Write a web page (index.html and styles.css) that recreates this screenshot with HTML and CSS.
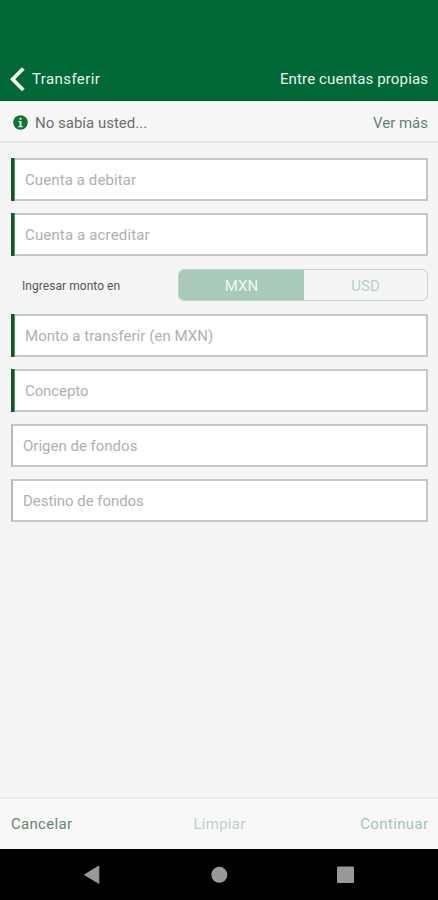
FILE: index.html
```html
<!DOCTYPE html>
<html lang="es">
<head>
<meta charset="utf-8">
<meta name="viewport" content="width=device-width">
<title>Transferir</title>
<link rel="stylesheet" href="styles.css">
</head>
<body>
<header class="header">
  <div class="back">
    <svg class="chevron" width="15" height="25" viewBox="0 0 15 25"><path d="M13.3 1.5 2.6 12.2l10.7 10.8" fill="none" stroke="#fff" stroke-width="3.7"/></svg>
    <span class="t-back">Transferir</span>
  </div>
  <span class="t-title">Entre cuentas propias</span>
</header>
<section class="info">
  <svg width="15" height="15" viewBox="0 0 15 15"><circle cx="7.5" cy="7.5" r="7.3" fill="#117532"/><path d="M6.5 2.7h2v2h-2zM5.5 6h3v5h1.2v1.2H5.3V11h1.3V7.2H5.5z" fill="#d5ead8"/></svg>
  <span class="t-tip">No sabía usted...</span>
  <a class="more">Ver más</a>
</section>
<main class="form">
  <div class="field required"><span class="t-debit">Cuenta a debitar</span></div>
  <div class="field required"><span class="t-credit">Cuenta a acreditar</span></div>
  <div class="currency">
    <span class="t-currency">Ingresar monto en</span>
    <div class="toggle"><span class="option active">MXN</span><span class="option">USD</span></div>
  </div>
  <div class="field required"><span class="t-amount">Monto a transferir (en MXN)</span></div>
  <div class="field required"><span class="t-concept">Concepto</span></div>
  <div class="field"><span class="t-origin">Origen de fondos</span></div>
  <div class="field"><span class="t-target">Destino de fondos</span></div>
</main>
<footer class="actions">
  <span class="cancel">Cancelar</span>
  <span class="clear">Limpiar</span>
  <span class="next">Continuar</span>
</footer>
<nav class="system">
  <svg width="438" height="51" viewBox="0 0 438 51"><g fill="#999"><path d="M84.5 25.8 98.8 17v17.3z" stroke="#999" stroke-linejoin="round"/><circle cx="219.3" cy="25.8" r="8"/><rect x="337" y="17.5" width="17" height="16.5" rx="1"/></g></svg>
</nav>
</body>
</html>
```
FILE: styles.css
```css
* { box-sizing: border-box; }
body {
  margin: 0;
  height: 900px;
  display: flex;
  flex-direction: column;
  background: #f5f5f5;
  font: 15px/20px Roboto, "Liberation Sans", sans-serif;
  color: #6a706d;
  white-space: nowrap;
  overflow: hidden;
}
.header {
  height: 101px;
  padding: 0 10px 11px;
  display: flex;
  justify-content: space-between;
  align-items: flex-end;
  background: #006937;
  border-bottom: 1px solid #075b20;
  color: #e9f5ed;
}
.back { display: flex; height: 20px; align-items: center; gap: 7px; }
.chevron { flex: none; }
.t-back { letter-spacing: 0.4px; }
.t-title { letter-spacing: 0.15px; margin-right: -0.15px; }
.info {
  height: 42px;
  padding: 3px 10px 0 13px;
  display: flex;
  align-items: center;
  gap: 7px;
  background: #f7f7f7;
  border-bottom: 2px solid #e9e9e9;
}
.more { margin-left: auto; color: #658174; }
.form { flex: 1; padding: 15px 10px 0 11px; }
.field {
  position: relative;
  height: 43px;
  margin-bottom: 12.2px;
  padding: 1px 10px 0;
  display: flex;
  align-items: center;
  background: #fff;
  border: 2px solid #c8c8c8;
  border-left-color: #b9b9b9;
  color: #adb1b1;
}
.required { padding-left: 12px; }
.required::before {
  content: "";
  position: absolute;
  inset: -2px auto -2px -2px;
  width: 4px;
  background: linear-gradient(to right, #075c20 3px, #5a8f69 3px);
}
.t-debit { letter-spacing: 0.1px; }
.t-credit { letter-spacing: 0.15px; }
.t-amount { letter-spacing: 0.05px; }
.t-concept { letter-spacing: -0.1px; }
.t-target { letter-spacing: -0.05px; }
.currency {
  height: 32px;
  margin: 13px 0 12.4px;
  padding-left: 11px;
  display: flex;
  align-items: center;
  justify-content: space-between;
  font-size: 12px;
  color: #555;
}
.t-currency { padding-top: 2px; letter-spacing: 0.05px; }
.toggle {
  width: 250px;
  height: 32px;
  display: flex;
  border: 1.5px solid #bfd3ca;
  border-radius: 6px;
  overflow: hidden;
  font-size: 15px;
}
.option { flex: 1; padding-top: 1px; display: flex; align-items: center; justify-content: center; color: #bdd0c8; }
.active { flex: 0 0 125px; background: #a9c9ba; color: #f0faf5; }
.actions {
  height: 52px;
  padding: 0 10px 0 11px;
  display: grid;
  grid-template-columns: 1fr auto 1fr;
  align-items: center;
  background: #f8f8f8;
  border-top: 2px solid #ebebeb;
}
.cancel { color: #6a8473; letter-spacing: 0.3px; }
.clear { color: #bfd2c8; letter-spacing: 0.25px; }
.next { justify-self: end; color: #a5c5b4; letter-spacing: 0.35px; margin-right: -0.35px; }
.system { height: 51px; background: #000; }
.system svg { display: block; }
```
